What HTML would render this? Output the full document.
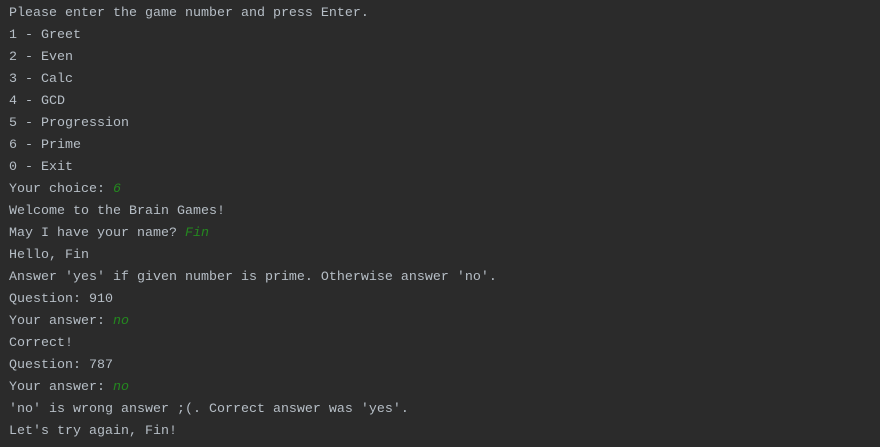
<!DOCTYPE html>
<html><head><style>
html,body{margin:0;padding:0;background:#2b2b2b;width:880px;height:447px;overflow:hidden}
pre{margin:0;padding:3px 0 0 9px;font-family:"Liberation Mono",monospace;font-size:13.33px;line-height:22px;color:#b6bec6}
i{color:#24881f;font-style:italic}
</style></head><body><pre>Please enter the game number and press Enter.
1 - Greet
2 - Even
3 - Calc
4 - GCD
5 - Progression
6 - Prime
0 - Exit
Your choice: <i>6</i>
Welcome to the Brain Games!
May I have your name? <i>Fin</i>
Hello, Fin
Answer 'yes' if given number is prime. Otherwise answer 'no'.
Question: 910
Your answer: <i>no</i>
Correct!
Question: 787
Your answer: <i>no</i>
'no' is wrong answer ;(. Correct answer was 'yes'.
Let's try again, Fin!</pre></body></html>
